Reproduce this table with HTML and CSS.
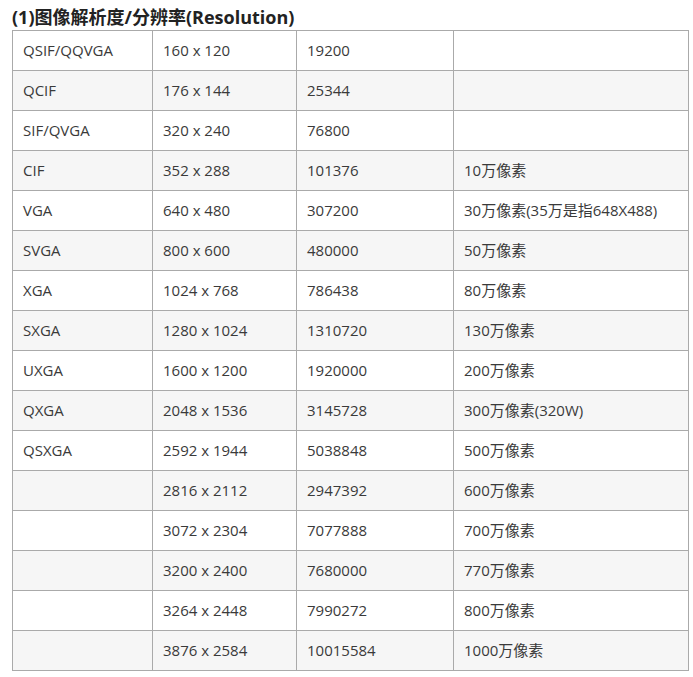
FILE: index.html
```html
<!DOCTYPE html>
<html>
<head>
<meta charset="utf-8">
<link rel="stylesheet" href="styles.css">
</head>
<body>
<div class="page">
<h3 class="title">(1)图像解析度/分辨率(Resolution)</h3>
<table class="res">
<colgroup><col class="c1"><col class="c2"><col class="c3"><col class="c4"></colgroup>
<tbody>
<tr><td>QSIF/QQVGA</td><td>160 x 120</td><td>19200</td><td></td></tr>
<tr><td>QCIF</td><td>176 x 144</td><td>25344</td><td></td></tr>
<tr><td>SIF/QVGA</td><td>320 x 240</td><td>76800</td><td></td></tr>
<tr><td>CIF</td><td>352 x 288</td><td>101376</td><td>10万像素</td></tr>
<tr><td>VGA</td><td>640 x 480</td><td>307200</td><td>30万像素(35万是指648X488)</td></tr>
<tr><td>SVGA</td><td>800 x 600</td><td>480000</td><td>50万像素</td></tr>
<tr><td>XGA</td><td>1024 x 768</td><td>786438</td><td>80万像素</td></tr>
<tr><td>SXGA</td><td>1280 x 1024</td><td>1310720</td><td>130万像素</td></tr>
<tr><td>UXGA</td><td>1600 x 1200</td><td>1920000</td><td>200万像素</td></tr>
<tr><td>QXGA</td><td>2048 x 1536</td><td>3145728</td><td>300万像素(320W)</td></tr>
<tr><td>QSXGA</td><td>2592 x 1944</td><td>5038848</td><td>500万像素</td></tr>
<tr><td></td><td>2816 x 2112</td><td>2947392</td><td>600万像素</td></tr>
<tr><td></td><td>3072 x 2304</td><td>7077888</td><td>700万像素</td></tr>
<tr><td></td><td>3200 x 2400</td><td>7680000</td><td>770万像素</td></tr>
<tr><td></td><td>3264 x 2448</td><td>7990272</td><td>800万像素</td></tr>
<tr><td></td><td>3876 x 2584</td><td>10015584</td><td>1000万像素</td></tr>
</tbody>
</table>
</div>
</body>
</html>
```
FILE: styles.css
```css
html, body {
  margin: 0;
  padding: 0;
  background: #fff;
}
.page {
  padding: 5px 0 0 12px;
  font-family: "Open Sans", "Noto Sans CJK SC", sans-serif;
  color: #333;
}
.title {
  margin: 0;
  font-size: 18px;
  line-height: 25px;
  font-weight: bold;
  color: #222;
}
.res {
  border-collapse: collapse;
  table-layout: fixed;
  width: 677px;
  font-size: 15px;
}
.c1 { width: 140px; }
.c2 { width: 144px; }
.c3 { width: 157px; }
.c4 { width: 235px; }
.res td {
  border: 1px solid #aaa;
  height: 40px;
  padding: 0 10px 2px;
  box-sizing: border-box;
  vertical-align: middle;
  white-space: nowrap;
  color: #3a3a3a;
}
.res tr:nth-child(even) td {
  background: #f6f6f6;
}
```
